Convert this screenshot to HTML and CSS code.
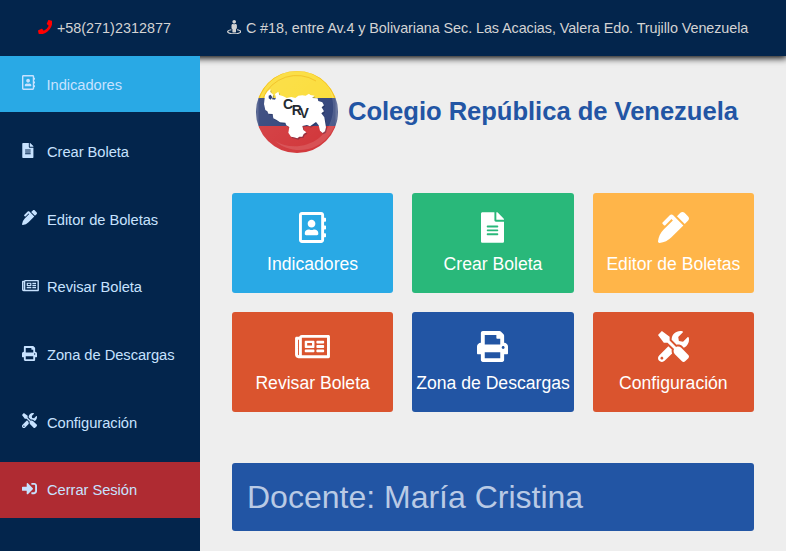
FILE: index.html
```html
<!DOCTYPE html>
<html lang="es">
<head>
<meta charset="utf-8">
<title>Colegio República de Venezuela</title>
<link rel="stylesheet" href="styles.css">
</head>
<body>
<svg class="sprite" aria-hidden="true">
  <symbol id="phone" viewBox="0 0 512 512"><path d="M493.4 24.6l-104-24c-11.3-2.6-22.9 3.3-27.5 13.9l-48 112c-4.2 9.8-1.4 21.3 6.9 28l60.6 49.6c-36 76.7-98.9 140.5-177.2 177.2l-49.6-60.6c-6.8-8.3-18.2-11.1-28-6.9l-112 48C3.9 366.5-2 378.1.6 389.4l24 104C27.1 504.2 36.7 512 48 512c256.1 0 464-207.5 464-464 0-11.2-7.7-20.9-18.6-23.4z"/></symbol>
  <symbol id="street" viewBox="0 0 512 512"><path d="M367.9 329.76c-4.62 5.3-9.78 10.1-15.9 13.65v22.94c66.52 9.34 112 28.05 112 49.65 0 30.93-93.12 56-208 56S48 446.93 48 416c0-21.6 45.48-40.3 112-49.65v-22.94c-6.12-3.55-11.28-8.35-15.9-13.65C58.87 345.34 0 378.05 0 416c0 53.02 114.62 96 256 96s256-42.98 256-96c0-37.95-58.87-70.66-144.1-86.24zM256 128c35.35 0 64-28.65 64-64S291.35 0 256 0s-64 28.65-64 64 28.65 64 64 64zm-64 192v96c0 17.67 14.33 32 32 32h64c17.67 0 32-14.33 32-32v-96c17.67 0 32-14.33 32-32v-96c0-26.51-21.49-48-48-48h-11.8c-11.07 5.03-23.26 8-36.2 8s-25.13-2.97-36.2-8H208c-26.51 0-48 21.49-48 48v96c0 17.67 14.33 32 32 32z"/></symbol>
  <symbol id="book" viewBox="0 0 448 512"><path d="M436 160c6.6 0 12-5.4 12-12v-40c0-6.6-5.4-12-12-12h-20V48c0-26.5-21.5-48-48-48H48C21.5 0 0 21.5 0 48v416c0 26.5 21.5 48 48 48h320c26.5 0 48-21.5 48-48v-48h20c6.6 0 12-5.4 12-12v-40c0-6.6-5.4-12-12-12h-20v-64h20c6.6 0 12-5.4 12-12v-40c0-6.6-5.4-12-12-12h-20v-64h20zm-68 304H48V48h320v416zM208 256c35.3 0 64-28.7 64-64s-28.7-64-64-64-64 28.7-64 64 28.7 64 64 64zm-89.6 128h179.2c12.4 0 22.4-8.6 22.4-19.2v-19.2c0-31.8-30.1-57.6-67.2-57.6-10.8 0-18.7 8-44.8 8-26.9 0-33.4-8-44.8-8-37.1 0-67.2 25.8-67.2 57.6v19.2c0 10.6 10 19.2 22.4 19.2z"/></symbol>
  <symbol id="file" viewBox="0 0 384 512"><path d="M224 136V0H24C10.7 0 0 10.7 0 24v464c0 13.3 10.7 24 24 24h336c13.3 0 24-10.7 24-24V160H248c-13.2 0-24-10.8-24-24zm64 236c0 6.6-5.4 12-12 12H108c-6.6 0-12-5.4-12-12v-8c0-6.6 5.4-12 12-12h168c6.6 0 12 5.4 12 12v8zm0-64c0 6.6-5.4 12-12 12H108c-6.6 0-12-5.4-12-12v-8c0-6.6 5.4-12 12-12h168c6.6 0 12 5.4 12 12v8zm0-72v8c0 6.6-5.4 12-12 12H108c-6.6 0-12-5.4-12-12v-8c0-6.6 5.4-12 12-12h168c6.6 0 12 5.4 12 12zm96-114.1v6.1H256V0h6.1c6.4 0 12.5 2.5 17 7l97.9 98c4.5 4.5 7 10.6 7 16.9z"/></symbol>
  <symbol id="pen" viewBox="0 0 512 512"><path d="M497.94 74.17l-60.11-60.11c-18.75-18.75-49.16-18.75-67.91 0l-56.55 56.55 128.02 128.02 56.55-56.55c18.75-18.75 18.75-49.15 0-67.91zm-246.8-20.53c-15.62-15.62-40.94-15.62-56.56 0L75.8 172.43c-6.25 6.25-6.25 16.38 0 22.62l22.63 22.63c6.25 6.25 16.38 6.25 22.63 0l101.82-101.82 22.63 22.62L93.95 290.03A327.038 327.038 0 0 0 .17 485.11l-.03.23c-1.7 15.28 11.21 28.2 26.49 26.51a327.02 327.02 0 0 0 195.34-93.8l196.79-196.79-82.77-82.77-84.85-84.85z"/></symbol>
  <symbol id="news" viewBox="0 0 576 512"><path d="M552 64H112c-20.858 0-38.643 13.377-45.248 32H24c-13.255 0-24 10.745-24 24v272c0 30.928 25.072 56 56 56h496c13.255 0 24-10.745 24-24V88c0-13.255-10.745-24-24-24zM48 392V144h16v248c0 4.411-3.589 8-8 8s-8-3.589-8-8zm480 8H111.422c.374-2.614.578-5.283.578-8V112h416v288zM172 280h136c6.627 0 12-5.373 12-12v-96c0-6.627-5.373-12-12-12H172c-6.627 0-12 5.373-12 12v96c0 6.627 5.373 12 12 12zm28-80h80v40h-80v-40zm-40 140v-24c0-6.627 5.373-12 12-12h136c6.627 0 12 5.373 12 12v24c0 6.627-5.373 12-12 12H172c-6.627 0-12-5.373-12-12zm192 0v-24c0-6.627 5.373-12 12-12h104c6.627 0 12 5.373 12 12v24c0 6.627-5.373 12-12 12H364c-6.627 0-12-5.373-12-12zm0-144v-24c0-6.627 5.373-12 12-12h104c6.627 0 12 5.373 12 12v24c0 6.627-5.373 12-12 12H364c-6.627 0-12-5.373-12-12zm0 72v-24c0-6.627 5.373-12 12-12h104c6.627 0 12 5.373 12 12v24c0 6.627-5.373 12-12 12H364c-6.627 0-12-5.373-12-12z"/></symbol>
  <symbol id="print" viewBox="0 0 512 512"><path d="M448 192V77.25c0-8.49-3.37-16.62-9.37-22.63L393.37 9.37c-6-6-14.14-9.37-22.63-9.37H96C78.33 0 64 14.33 64 32v160c-35.35 0-64 28.65-64 64v112c0 8.84 7.16 16 16 16h48v96c0 17.67 14.33 32 32 32h320c17.67 0 32-14.33 32-32v-96h48c8.84 0 16-7.16 16-16V256c0-35.35-28.65-64-64-64zm-64 256H128v-96h256v96zm0-224H128V64h192v48c0 8.84 7.16 16 16 16h48v96zm48 72c-13.25 0-24-10.75-24-24 0-13.26 10.75-24 24-24s24 10.74 24 24c0 13.25-10.75 24-24 24z"/></symbol>
  <symbol id="tools" viewBox="0 0 512 512"><path d="M501.1 395.7L384 278.6c-23.1-23.1-57.6-27.6-85.4-13.9L192 158.1V96L64 0 0 64l96 128h62.1l106.6 106.6c-13.6 27.8-9.2 62.3 13.9 85.4l117.1 117.1c14.6 14.6 38.2 14.6 52.7 0l52.7-52.7c14.5-14.6 14.5-38.2 0-52.7zM331.7 225c28.3 0 54.9 11 74.9 31l19.4 19.4c15.8-6.9 30.8-16.5 43.8-29.5 37.1-37.1 49.7-89.3 37.9-136.7-2.2-9-13.5-12.1-20.1-5.5l-74.4 74.4-67.9-11.3L334 98.9l74.4-74.4c6.6-6.6 3.4-17.9-5.7-20.2-47.4-11.7-99.6.9-136.6 37.9-28.5 28.5-41.9 66.1-41.2 103.6l82.1 82.1c8.1-1.9 16.5-2.9 24.7-2.9zm-103.9 82l-56.7-56.7L18.7 402.8c-25 25-25 65.5 0 90.5s65.5 25 90.5 0l123.6-123.6c-7.6-19.9-9.9-41.6-5-62.7zM64 472c-13.2 0-24-10.8-24-24 0-13.3 10.7-24 24-24s24 10.7 24 24c0 13.2-10.7 24-24 24z"/></symbol>
  <symbol id="exit" viewBox="0 0 512 512"><path d="M416 448h-84c-6.6 0-12-5.4-12-12v-40c0-6.6 5.4-12 12-12h84c17.7 0 32-14.3 32-32V160c0-17.7-14.3-32-32-32h-84c-6.6 0-12-5.4-12-12V76c0-6.6 5.4-12 12-12h84c53 0 96 43 96 96v192c0 53-43 96-96 96zm-47-201L201 79c-15-15-41-4.5-41 17v96H24c-13.3 0-24 10.7-24 24v96c0 13.3 10.7 24 24 24h136v96c0 21.5 26 32 41 17l168-168c9.3-9.4 9.3-24.6 0-34z"/></symbol>
</svg>

<header class="topbar">
  <span class="contact phone"><svg><use href="#phone"/></svg>+58(271)2312877</span>
  <span class="contact address"><svg><use href="#street"/></svg>C #18, entre Av.4 y Bolivariana Sec. Las Acacias, Valera Edo. Trujillo Venezuela</span>
</header>

<div class="layout">
  <nav class="sidebar">
    <a class="item active"><svg class="w14"><use href="#book"/></svg>Indicadores</a>
    <a class="item"><svg class="w12"><use href="#file"/></svg>Crear Boleta</a>
    <a class="item"><svg><use href="#pen"/></svg>Editor de Boletas</a>
    <a class="item"><svg class="w18"><use href="#news"/></svg>Revisar Boleta</a>
    <a class="item"><svg><use href="#print"/></svg>Zona de Descargas</a>
    <a class="item"><svg><use href="#tools"/></svg>Configuración</a>
    <a class="item logout"><svg><use href="#exit"/></svg>Cerrar Sesión</a>
  </nav>

  <main class="content">
    <div class="brand">
      <svg class="logo" viewBox="0 0 82 82">
        <defs>
          <clipPath id="disc"><circle cx="41" cy="41" r="41"/></clipPath>
          <linearGradient id="shade" x1="0" y1="0" x2="1" y2="1">
            <stop offset="0" stop-color="#fff" stop-opacity=".12"/>
            <stop offset="1" stop-color="#fff" stop-opacity="0"/>
          </linearGradient>
          <path id="map" d="M60 100l8-12 8-7 0 9 9 8-4 14 9 1 3-6-3-11 10-7 3 10 12 4 10 5 14-3 12 3 9-7 12-1 10 1 10-6 4 4 13 2-8 7 17 1 2 8 12 4 5 9-7 6 7 12-8 6 9 12 5 30-3 12-7 5-8-7-4-16-8-10-18 13-9-4-14 3 3 12 9 7-8 5-4 8-9 0-6 5-10-3-9-2-8-12 3-17-9-5-3-8-16-1-10-7-10-5-2-13-13-1-3-7-6-4-4-18z"/>
        </defs>
        <g clip-path="url(#disc)">
          <path fill="#fbdc35" d="M0 0h82v27H0z"/>
          <path fill="#2f4178" d="M0 27h82v28H0z"/>
          <path fill="#d13438" d="M0 55h82v27H0z"/>
          <path fill="#fff" opacity=".13" d="M69 11C82 29 79 54 63 67 50 77 32 78 19 70c16 14 43 12 56-8 12-19 8-39-6-51z"/>
          <circle cx="41" cy="41" r="41" fill="url(#shade)"/>
          <path d="M1.500 27V55A41 41 0 0 0 80.500 55V27" fill="none" stroke="#fff" stroke-opacity=".15" stroke-width="2"/>
          <path d="M3 27A40 40 0 0 1 79 27" fill="none" stroke="#f5c01e" stroke-width="1.500"/>
          <path d="M7 27A36.500 36.500 0 0 1 60 10" fill="none" stroke="#f0bd25" stroke-width=".8"/>
        </g>
        <g transform="translate(-11 -9) scale(.3333)">
          <use href="#map" fill="#152044" opacity=".3" transform="translate(3 4)"/>
          <use href="#map" fill="#fff"/>
          <path fill="#2f4178" d="M71 101l6-3 5 8-5 7-6-4z"/>
        </g>
        <text class="monogram" x="27 35.700 43.500" y="37.500 43.500 46.500">CRV</text>
      </svg>
      <h1>Colegio República de Venezuela</h1>
    </div>

    <div class="cards">
      <a class="card sky"><svg class="w28"><use href="#book"/></svg>Indicadores</a>
      <a class="card green"><svg class="w24"><use href="#file"/></svg>Crear Boleta</a>
      <a class="card amber"><svg><use href="#pen"/></svg>Editor de Boletas</a>
      <a class="card red"><svg class="w36"><use href="#news"/></svg>Revisar Boleta</a>
      <a class="card blue"><svg><use href="#print"/></svg>Zona de Descargas</a>
      <a class="card red"><svg><use href="#tools"/></svg>Configuración</a>
    </div>

    <div class="teacher">Docente: María Cristina</div>
  </main>
</div>
</body>
</html>
```
FILE: styles.css
```css
* { box-sizing: border-box; }
body {
  margin: 0;
  height: 551px;
  overflow: hidden;
  display: flex;
  flex-direction: column;
  background: #eee;
  font-family: "Liberation Sans", Arial, sans-serif;
}
svg { fill: currentColor; flex: none; }
.sprite { display: none; }

.topbar {
  flex: none;
  height: 56px;
  display: flex;
  align-items: center;
  padding-left: 38px;
  background: #03254c;
  color: lightgray;
  font-size: 14.4px;
  box-shadow: 0 1px 7px 1px #000;
}
.contact { display: flex; align-items: center; white-space: nowrap; }
.contact svg { width: 14.4px; height: 14.4px; margin: -2px 4.5px 0 0; }
.phone { width: 189px; }
.phone svg { color: red; }
.address { letter-spacing: -0.08px; }

.layout { flex: 1; display: flex; min-height: 0; }

.sidebar {
  position: relative;
  width: 200px;
  flex: none;
  display: flex;
  flex-direction: column;
  gap: 11.67px;
  background: #03254c;
  color: #c7e2ff;
}
.item {
  height: 56px;
  flex: none;
  display: flex;
  align-items: center;
  padding: 1px 0 0 22px;
  font-size: 14.7px;
  letter-spacing: -0.04px;
  white-space: nowrap;
}
.item svg { width: 15px; height: 15px; margin: -4px 10px 0 0; }
.item .w14 { width: 13.1px; margin-right: 11.4px; }
.item .w12 { width: 11.8px; margin-right: 13.2px; }
.item .w18 { width: 16.9px; margin-right: 8.1px; }
.active { background: #29a9e5; }
.logout { background: #af2b32; }

.content { flex: 1; padding: 15px 32px 0; }
.brand {
  height: 82px;
  display: flex;
  align-items: center;
  padding-left: 24px;
}
.logo { width: 82px; height: 82px; margin-right: 10px; }
.monogram {
  fill: #242a32;
  font-size: 14px;
  font-weight: bold;
}
h1 {
  margin: -2px 0 0;
  color: #2255a4;
  font-size: 25.6px;
  letter-spacing: -0.04px;
  white-space: nowrap;
}

.cards {
  display: grid;
  grid-template-columns: repeat(3, 1fr);
  grid-auto-rows: 100px;
  gap: 19.2px;
  margin-top: 40px;
}
.card {
  display: flex;
  flex-direction: column;
  align-items: center;
  padding-top: 19px;
  border-radius: 3px;
  color: #fff;
  font-size: 17.6px;
  line-height: 20px;
  white-space: nowrap;
}
.card svg { width: 31px; height: 31px; margin-bottom: 11px; }
.card .w28 { width: 27px; }
.card .w24 { width: 23px; }
.card .w36 { width: 35px; }
.sky { background: #29a9e5; }
.green { background: #29b87a; }
.amber { background: #ffb549; }
.red { background: #da542e; }
.blue { background: #2255a4; }

.teacher {
  height: 68px;
  margin-top: 51px;
  padding-left: 15px;
  border-radius: 3px;
  background: #2255a4;
  color: #b9cae5;
  font-size: 32px;
  line-height: 68px;
}
```
